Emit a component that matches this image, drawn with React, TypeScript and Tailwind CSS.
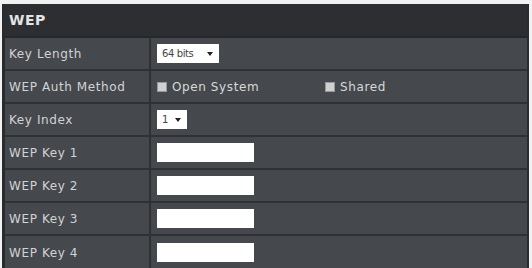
const font = { fontFamily: '"DejaVu Sans", Verdana, sans-serif' };

function Row({ label, children, last }: { label: string; children?: React.ReactNode; last?: boolean }) {
  return (
    <div className={`flex h-[33px] bg-[#45484d] ${last ? "" : "border-b-2 border-[#2f3134]"}`}>
      <div className="w-[146px] shrink-0 flex items-center pl-[4px] border-r-2 border-[#2f3134] text-[12px] tracking-[0.6px] text-[#d2d3d4]">
        {label}
      </div>
      <div className="flex-1 flex items-center pl-[6px]">{children}</div>
    </div>
  );
}

function Select({ value, width }: { value: string; width: string }) {
  return (
    <div className={`${width} h-[19px] bg-white flex items-center justify-between pl-[5px] pr-[6px] text-[10px] text-[#444]`}>
      <span className="tracking-[-0.4px]">{value}</span>
      <span className="w-0 h-0 border-l-[3px] border-r-[3px] border-t-[4px] border-l-transparent border-r-transparent border-t-[#222]" />
    </div>
  );
}

function Check({ label }: { label: string }) {
  return (
    <span className="flex items-center gap-[5px] text-[12px] tracking-[0.6px] text-[#d8d9da]">
      <span className="w-[10px] h-[10px] bg-[#d0d0d0] border border-[#999]" />
      {label}
    </span>
  );
}

function KeyInput() {
  return <div className="w-[97px] h-[19px] bg-white" />;
}

export default function App() {
  return (
    <div className="w-[532px] h-[268px] bg-[#f2f2f2] pt-[4px] pl-[2px] pr-[3px] overflow-hidden" style={font}>
      <div className="h-full border-l-[3px] border-r-[2px] border-[#2a2b2e] bg-[#45484d] overflow-hidden">
        <div className="h-[34px] bg-[#2d2e32] flex items-center pl-[4px] border-b-2 border-[#26272a]">
          <span className="text-[14px] font-bold tracking-[0.5px] text-[#e4e4e4]">WEP</span>
        </div>
        <Row label="Key Length">
          <Select value="64 bits" width="w-[62px]" />
        </Row>
        <Row label="WEP Auth Method">
          <div className="flex items-center">
            <div className="w-[168px]">
              <Check label="Open System" />
            </div>
            <Check label="Shared" />
          </div>
        </Row>
        <Row label="Key Index">
          <Select value="1" width="w-[30px]" />
        </Row>
        <Row label="WEP Key 1">
          <KeyInput />
        </Row>
        <Row label="WEP Key 2">
          <KeyInput />
        </Row>
        <Row label="WEP Key 3">
          <KeyInput />
        </Row>
        <Row label="WEP Key 4" last>
          <KeyInput />
        </Row>
      </div>
    </div>
  );
}
